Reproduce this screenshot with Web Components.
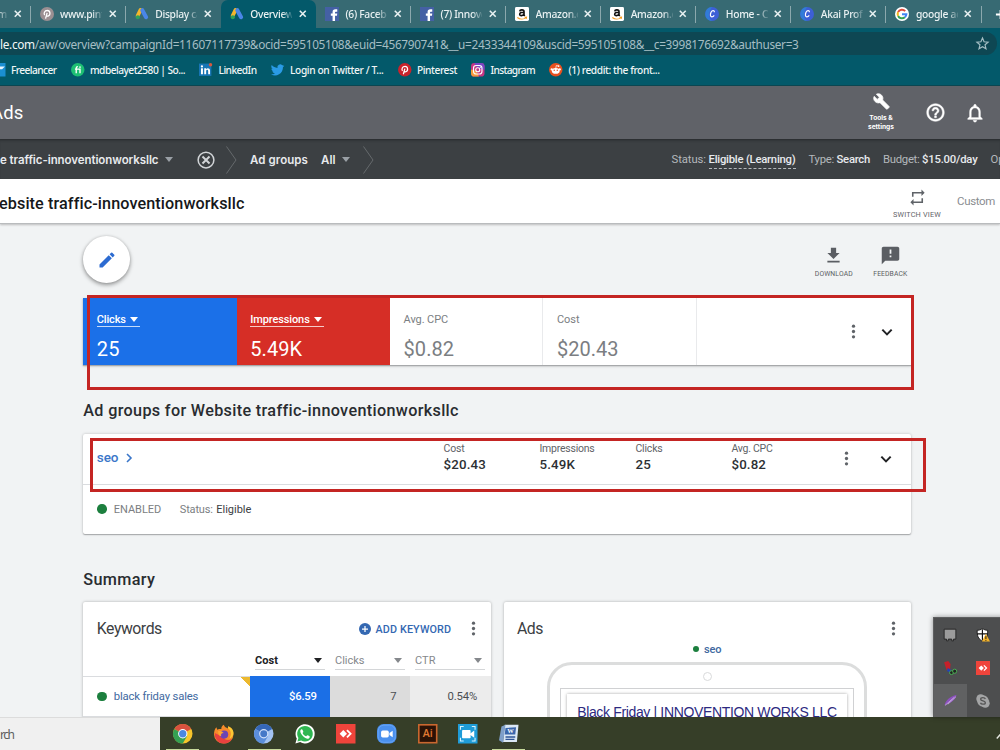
<!DOCTYPE html>
<html lang="en">
<head>
<meta charset="utf-8">
<title>Overview</title>
<style>
    html, body {
        margin: 0;
        height: 100%;
        overflow: hidden;
        background: #f1f3f4;
        font-family: Roboto, "Liberation Sans", sans-serif;
    }
</style>
</head>
<body>
<ads-desktop></ads-desktop>

<script>
const ICONS = {
    close: '<path d="M4.500 4.500l15 15M19.500 4.500l-15 15" stroke="currentColor" stroke-width="4" fill="none"/>',
    plus: '<path d="M12 2v20M2 12h20" stroke="currentColor" stroke-width="4" fill="none"/>',
    star: '<path d="M12 2l2.900 6.800 7.400.7-5.600 4.900 1.700 7.200L12 17.800l-6.400 3.800 1.700-7.200-5.600-4.900 7.400-.7z" stroke="currentColor" stroke-width="2.200" fill="none"/>',
    pin: '<circle cx="12" cy="12" r="12" fill="var(--bg, #c8232c)"/><path d="M9.500 20l2.700-10M8 14c-2-3-.5-8 4.500-8 5.500 0 6 8 1.500 9.500-1.500.5-2.500-.3-3-1.300" fill="none" stroke="#fff" stroke-width="2.200"/>',
    gads: '<path d="M9.500 5L4.500 15" stroke="#f4b62c" stroke-width="6.500" stroke-linecap="round"/><path d="M12.500 5.500l6.500 12" stroke="#4a86e8" stroke-width="7" stroke-linecap="round"/><circle cx="4.800" cy="17.500" r="3.500" fill="#2fa15a"/>',
    facebook: '<rect width="24" height="24" fill="#4460a4"/><path d="M13 24v-9h-3v-4h3V8.500C13 5.500 14.500 4 18 4h3v4h-2.500c-1 0-1.300.5-1.300 1.300V11H21l-.5 4h-3.300v9z" fill="#fff"/>',
    amazon: '<rect width="24" height="24" rx="2.500" fill="#fff"/><path d="M8 7.500c.5-3.500 7.500-3.500 7.500.5v6l1.300 1.500M15.500 9c-4 0-7.500.5-7.500 3.500 0 3.300 6 3 7.500-.7" fill="none" stroke="#111" stroke-width="2.700"/><path d="M4 18c4.500 3.500 11 3.500 15 .3M16.500 17.500l3.300-.2-.6 3" fill="none" stroke="#f39a1e" stroke-width="1.800"/>',
    canva: '<circle cx="12" cy="12" r="12" fill="#3d5fd6"/><path d="M2 6a12 12 0 0 0 10 18C6 19 5 10 12 0 8 0 4 2 2 6z" fill="#2a8fd8" opacity=".6"/><path d="M16 9c.3-4-4-3.500-5.500-.2-2 4-1.500 8 1.300 8 1.700 0 3-1 4-2.500" fill="none" stroke="#fff" stroke-width="2"/>',
    google: '<circle cx="12" cy="12" r="12" fill="#fff"/><g fill="none" stroke-width="3.500"><path d="M17.500 7A7.500 7.500 0 0 0 5.300 8.800" stroke="#e04a3a"/><path d="M5.300 8.800a7.500 7.500 0 0 0 0 6.500" stroke="#f2b61c"/><path d="M5.300 15.300a7.500 7.500 0 0 0 11.600 2.300" stroke="#34a353"/><path d="M16.900 17.600a7.500 7.500 0 0 0 2.600-5.200H12" stroke="#4285f4"/></g>',
    freelancer: '<rect width="24" height="24" fill="#1b8fd2"/><path d="M6 6h17l-5 5h-4l-3 9-2-8z" fill="#e8f6ff"/>',
    fiverr: '<circle cx="12" cy="12" r="12" fill="#1dbf73"/><path d="M9.300 18V9c0-1.700.9-2.500 3-2.500M7 11h9v7" fill="none" stroke="#fff" stroke-width="2.400"/><circle cx="16" cy="7.300" r="1.500" fill="#fff"/>',
    linkedin: '<rect y="1" width="22" height="22" fill="#1775b5"/><path d="M3.500 9.500h3.500V20H3.500zM9.300 9.500h3.300v1.500c2-3 7-2.200 7 2.500V20h-3.300v-6c0-3-3.600-2.600-3.600 0v6H9.300z" fill="#fff"/><circle cx="5.200" cy="6" r="2" fill="#fff"/><circle cx="20.500" cy="3" r="3" fill="#d8583c"/>',
    twitter: '<path d="M23.600 4.900c-.9.400-1.800.7-2.800.8 1-.6 1.800-1.600 2.200-2.700-1 .6-2 1-3.100 1.200a4.900 4.900 0 0 0-8.400 4.500C7.400 8.500 3.800 6.600 1.400 3.600a4.900 4.900 0 0 0 1.500 6.600c-.8 0-1.600-.2-2.200-.6 0 2.300 1.600 4.400 3.900 4.900-.7.200-1.500.2-2.200.1.600 2 2.400 3.400 4.600 3.400A9.900 9.900 0 0 1 0 20.100a14 14 0 0 0 21.200-12.500c1-.7 1.800-1.600 2.400-2.700z" fill="#2a9be6"/>',
    instagram: '<rect width="24" height="24" rx="6" fill="#c63583"/><path d="M0 12c6-1 12 4 14 12H6c-4 0-6-2-6-6z" fill="#f79a3c"/><path d="M6 0h12c4 0 6 2 6 6v6C18 12 8 8 6 0z" fill="#7a45c4"/><rect x="4.500" y="4.500" width="15" height="15" rx="4.500" fill="none" stroke="#fff" stroke-width="2"/><circle cx="12" cy="12" r="3.600" fill="none" stroke="#fff" stroke-width="2"/><circle cx="16.600" cy="7.400" r="1.100" fill="#fff"/>',
    reddit: '<circle cx="12" cy="12" r="12" fill="#e8501e"/><ellipse cx="12" cy="14" rx="7" ry="5" fill="#fff"/><circle cx="4.800" cy="11.500" r="2" fill="#fff"/><circle cx="19.200" cy="11.500" r="2" fill="#fff"/><path d="M12 9.500l1-5 4 1" stroke="#fff" stroke-width="1.300" fill="none"/><circle cx="17" cy="5.500" r="1.600" fill="#fff"/><circle cx="9.300" cy="13" r="1.300" fill="#e8501e"/><circle cx="14.700" cy="13" r="1.300" fill="#e8501e"/>',
    wrench: '<path d="M22.700 19l-9.100-9.100c.9-2.300.4-5-1.500-6.900-2-2-5-2.400-7.400-1.300L9 6 6 9 1.600 4.700C.4 7.100.9 10.100 2.900 12.100c1.900 1.900 4.600 2.400 6.900 1.500l9.100 9.100c.4.4 1 .4 1.400 0l2.300-2.300c.5-.4.5-1.100.1-1.400z" fill="currentColor" stroke="currentColor"/>',
    help: '<path d="M11 18h2v-2h-2v2zm1-16C6.480 2 2 6.480 2 12s4.480 10 10 10 10-4.480 10-10S17.520 2 12 2zm0 18c-4.410 0-8-3.590-8-8s3.590-8 8-8 8 3.590 8 8-3.590 8-8 8zm0-14c-2.210 0-4 1.790-4 4h2c0-1.100.9-2 2-2s2 .9 2 2c0 2-3 1.750-3 5h2c0-2.250 3-2.500 3-5 0-2.210-1.790-4-4-4z" fill="currentColor" stroke="currentColor" stroke-width=".6"/>',
    bell: '<path d="M12 22c1.100 0 2-.9 2-2h-4c0 1.100.9 2 2 2zm6-6v-5c0-3.070-1.630-5.640-4.500-6.320V4c0-.83-.67-1.500-1.500-1.500s-1.500.67-1.500 1.500v.68C7.640 5.360 6 7.920 6 11v5l-2 2v1h16v-1l-2-2zm-2 1H8v-6c0-2.480 1.510-4.500 4-4.500s4 2.020 4 4.500v6z" fill="currentColor" stroke="currentColor" stroke-width=".3"/>',
    closeCircle: '<circle cx="12" cy="12" r="10.500" fill="none" stroke="currentColor" stroke-width="2"/><path d="M7.300 7.300l9.400 9.400M16.700 7.300l-9.400 9.400" stroke="currentColor" stroke-width="2.600"/>',
    switchView: '<path d="M7 7h10v3l4-4-4-4v3H5v6h2V7zm10 10H7v-3l-4 4 4 4v-3h12v-6h-2v4z" fill="currentColor"/>',
    pencil: '<path d="M3 17.250V21h3.750L17.810 9.940l-3.750-3.750L3 17.250zM20.710 7.040a1 1 0 0 0 0-1.410l-2.340-2.340a1 1 0 0 0-1.410 0l-1.830 1.830 3.750 3.750 1.830-1.830z" fill="currentColor"/>',
    download: '<path d="M19 9h-4V3H9v6H5l7 7 7-7zM5 18v2h14v-2H5z" fill="currentColor"/>',
    feedback: '<path d="M20 2H4c-1.100 0-2 .9-2 2v18l4-4h14c1.100 0 2-.9 2-2V4c0-1.100-.9-2-2-2zm-7 12h-2v-2h2v2zm0-4h-2V5h2v5z" fill="currentColor"/>',
    more: '<circle cx="12" cy="4.500" r="2.300" fill="currentColor"/><circle cx="12" cy="12" r="2.300" fill="currentColor"/><circle cx="12" cy="19.500" r="2.300" fill="currentColor"/>',
    expand: '<path d="M5 8.500l7 7 7-7" fill="none" stroke="currentColor" stroke-width="3"/>',
    next: '<path d="M8 4l8 8-8 8" fill="none" stroke="currentColor" stroke-width="3.200"/>',
    up: '<path d="M3 18l9-10 9 10" fill="none" stroke="currentColor" stroke-width="2.500"/>',
    add: '<circle cx="12" cy="12" r="12" fill="currentColor"/><path d="M12 6v12M6 12h12" stroke="#fff" stroke-width="2.500"/>',
    chrome: '<circle cx="12" cy="12" r="12" fill="#f7c52b"/><path d="M12 12L1.600 6A12 12 0 0 1 22.400 6z" fill="#d9513f"/><path d="M1.600 6A12 12 0 0 0 12 24l5.200-9L12 12z" fill="#35a053"/><circle cx="12" cy="12" r="5.700" fill="#fff"/><circle cx="12" cy="12" r="4.500" fill="#4a87e0"/>',
    firefox: '<path d="M12 1c1 3 3 3.500 5 4.500l.5-3C22 5 24 9 24 13a12 11 0 0 1-24 0c0-4 1-7 3-9l1 3c2-1 3-1 5-1 0-2 1-4 3-5z" fill="#f58a2b"/><path d="M1 11a11.500 11.500 0 0 0 11 13c5 0 9-3 10-6-4 3-9 2-11-2z" fill="#e8413f"/><path d="M17 5c4 3 5 8 2 13 3-1 5-4 5-7 0-4-3-7-6-8z" fill="#fcc833"/><circle cx="12.500" cy="13" r="5" fill="#6a45b5"/><path d="M5 9c3-1 5 0 7 2-3 0-4 2-3 4-3 0-4-3-4-6z" fill="#fba530"/>',
    chromium: '<circle cx="12" cy="12" r="12" fill="#a3c3f2"/><path d="M12 12L1.600 6A12 12 0 0 1 22.400 6z" fill="#3567b8"/><path d="M1.600 6A12 12 0 0 0 12 24l5.200-9L12 12z" fill="#5b8edb"/><circle cx="12" cy="12" r="5.700" fill="#d5e3fa"/><circle cx="12" cy="12" r="4.300" fill="#4679c8"/>',
    whatsapp: '<path d="M.5 24l1.700-6.100A11.800 11.800 0 1 1 6.400 22.200z" fill="#fff"/><path d="M3 21.500l1.200-4.300a9.600 9.600 0 1 1 3.400 3.200z" fill="#2fb651"/><path d="M8 6.500c-3 1.500-1 5.500 2 8.500s6.500 4.200 8 1.500c.6-1.200-.2-1.500-2.500-2.700-1-.4-1.300 1.500-2 1.400-1.700-.6-3.600-2.400-4.200-4 0-.7 1.300-1 .9-2C9.500 7.500 9 6 8 6.500z" fill="#fff"/>',
    anydesk: '<rect width="24" height="24" fill="#ef443b"/><path d="M4.500 12l4.500-4.500 4.500 4.500L9 16.500z" fill="#fff"/><path d="M13.500 7.500L18 12l-4.500 4.500" fill="none" stroke="#fff" stroke-width="2.200"/>',
    zoomApp: '<rect width="24" height="24" rx="8" fill="#4a90ee"/><rect x="1.500" y="1.500" width="21" height="21" rx="7" fill="none" stroke="#6da8f5"/><rect x="5" y="8" width="9.500" height="8.500" rx="2" fill="#fff"/><path d="M15.300 11l4-2.800v8l-4-2.700z" fill="#fff"/>',
    illustrator: '<rect x="1" y="1" width="22" height="22" fill="#2b1206" stroke="#c9672f" stroke-width="2"/><text x="12" y="16.500" font-family="Open Sans, sans-serif" font-size="13" font-weight="600" fill="#e07a33" text-anchor="middle">Ai</text>',
    recorder: '<rect width="24" height="24" fill="#1f9cd8"/><path d="M3 7V3h4M17 3h4v4M3 17v4h4M17 21h4v-4" fill="none" stroke="#d8f2ff" stroke-width="1.300"/><rect x="5" y="7.500" width="10.500" height="10" rx="1" fill="#fff"/><path d="M14 12.500l6-4.500v9z" fill="#fff"/>',
    word: '<path d="M7 1h17l-2 21H5z" fill="#dbe8f5"/><path d="M3 3l5-2-3 22-5-3z" fill="#7f9fc9"/><path d="M8 5l13-1-1 9H7z" fill="#3b66ab"/><text x="14" y="11.500" font-family="Liberation Serif, serif" font-size="8" font-weight="700" fill="#fff" text-anchor="middle">W</text><path d="M8 16h12M8 19h11" stroke="#2f5496" stroke-width="1.600"/>',
    disk: '<path d="M2 2h20v17h-4v3h-3v-3H9v3H6v-3H2z" fill="#9b9b9b" stroke="#222" stroke-width="1.500"/>',
    shield: '<path d="M11 1c3 2 6 3 9 3 0 9-1 14-9 19C3 18 2 13 2 4c3 0 6-1 9-3z" fill="#fff" stroke="#111" stroke-width="1.500"/><path d="M11 2v20M2 10h18" stroke="#111" stroke-width="2"/><path d="M17 10l7 13H10z" fill="#f3b32c"/><path d="M17 14v5M17 20.500v1.500" stroke="#111" stroke-width="1.600"/>',
    devices: '<path d="M2 2l7-2 4 5-1 10H6z" fill="#c5202a"/><path d="M8 12l6 3-2 5-5-3z" fill="#2443b5"/><circle cx="14.500" cy="20" r="3.300" fill="#222" stroke="#49b253" stroke-width="1.600"/><circle cx="20" cy="17.500" r="3.500" fill="#222" stroke="#49b253" stroke-width="1.600"/>',
    feather: '<path d="M1 21C3 12 11 4 23 2c-1 8-9 14-18 17z" fill="#8b50bd"/><path d="M2 21L19 6M7 19L22 5" stroke="#cbb0e3" stroke-width="1.500"/>',
    skype: '<circle cx="8" cy="8" r="7.500" fill="#a4a5a6"/><circle cx="16" cy="16" r="7.500" fill="#a4a5a6"/><circle cx="12" cy="12" r="10" fill="#a4a5a6"/><path d="M16 8.500c-1-3-8-3-8 .3 0 3.700 8 2.300 8 6 0 3.500-7.500 3.500-8.300.2" stroke="#555" stroke-width="2.300" fill="none"/>',
};

// Small base class: shadow root with the element's styles and markup
class BaseElement extends HTMLElement {
    constructor() {
        super();
        this.attachShadow({ mode: 'open' });
    }

    connectedCallback() {
        this.shadowRoot.innerHTML = this.template();
    }

    attr(name, fallback = '') {
        return this.getAttribute(name) ?? fallback;
    }
}

// Text set to a given width by letter spacing
class FitText extends BaseElement {
    template() {
        return `
            <style>
                :host { display: inline-block; flex: none; white-space: nowrap; }
                span { display: inline-block; }
            </style>
            <span><slot></slot></span>
        `;
    }

    connectedCallback() {
        super.connectedCallback();
        const width = parseFloat(this.attr('w', '0'));
        if (!width) return;
        const span = this.shadowRoot.querySelector('span');
        const natural = span.getBoundingClientRect().width;
        span.style.letterSpacing = (width - natural) / this.textContent.length + 'px';
        this.style.width = width + 'px';
    }
}

class UiIcon extends BaseElement {
    template() {
        const size = this.attr('size', '16');
        return `
            <style>
                :host { display: block; flex: none; width: ${size}px; height: ${size}px; }
                svg { display: block; overflow: visible; }
            </style>
            <svg width="${size}" height="${size}" viewBox="0 0 24 24">${ICONS[this.attr('name')]}</svg>
        `;
    }
}

class DropCaret extends BaseElement {
    template() {
        return `
            <style>
                :host {
                    display: block;
                    flex: none;
                    border: 4.5px solid transparent;
                    border-top: 5px solid currentColor;
                    border-bottom: 0;
                }
            </style>
        `;
    }
}

class StatusDot extends BaseElement {
    template() {
        const size = this.attr('size', '9.500');
        return `
            <style>
                :host {
                    display: block;
                    flex: none;
                    width: ${size}px;
                    height: ${size}px;
                    border-radius: 50%;
                    background: #1c7f3e;
                }
            </style>
        `;
    }
}

class BrowserTab extends BaseElement {
    template() {
        return `
            <style>
                :host {
                    display: flex;
                    align-items: center;
                    flex: none;
                    box-sizing: border-box;
                    width: 95.1px;
                    height: 28px;
                    padding-left: 9px;
                    position: relative;
                    color: #e9f1f2;
                    font: 500 10.3px "Noto Sans", sans-serif;
                }
                :host([active]) { background: #03596a; border-radius: 7px 7px 0 0; }
                .label {
                    width: 42px;
                    margin: 0 5.5px 0 6.5px;
                    overflow: hidden;
                    white-space: nowrap;
                    letter-spacing: -0.3px;
                    -webkit-mask-image: linear-gradient(90deg, #000 76%, transparent 104%);
                    mask-image: linear-gradient(90deg, #000 76%, transparent 104%);
                }
                :host([end]) .label { text-align: right; }
                .line {
                    position: absolute;
                    right: 0;
                    top: 6px;
                    width: 1px;
                    height: 17px;
                    background: #8ba8ad;
                }
                :host([plain]) .line, :host([active]) .line { display: none; }
            </style>
            <ui-icon name="${this.attr('icon')}" size="14"></ui-icon>
            <div class="label"><slot></slot></div>
            <ui-icon name="close" size="9.500"></ui-icon>
            <div class="line"></div>
        `;
    }
}

class BookMark extends BaseElement {
    template() {
        return `
            <style>
                :host { display: flex; align-items: center; gap: 6px; flex: none; }
            </style>
            <ui-icon name="${this.attr('icon')}" size="13.500"></ui-icon>
            <fit-text w="${this.attr('w')}">${this.textContent}</fit-text>
        `;
    }
}

class BrowserChrome extends BaseElement {
    template() {
        return `
            <style>
                :host { display: block; flex: none; height: 85px; background: #03596a; border-bottom: 1px solid #0c4651; overflow: hidden; }
                .tabs { display: flex; align-items: center; height: 28px; background: #376a73; }
                .tabs :first-child { margin-left: -64.5px; }
                .new { color: #fff; margin-left: 13px; }
                .url {
                    display: flex;
                    align-items: center;
                    justify-content: space-between;
                    box-sizing: border-box;
                    height: 23px;
                    margin: 4px 3px 0 -20px;
                    padding: 0 8px 0 20px;
                    border-radius: 12px;
                    background: #0e4753;
                    color: #a5bec4;
                    font: 11.8px "Noto Sans", sans-serif;
                }
                .url b { font-weight: 400; color: #f2f7f8; }
                .marks {
                    display: flex;
                    gap: 14px;
                    align-items: center;
                    height: 30px;
                    margin-left: -8.5px;
                    color: #f0f5f6;
                    font: 500 10.2px "Noto Sans", sans-serif;
                }
            </style>
            <div class="tabs">
                <browser-tab icon="amazon" end>m</browser-tab>
                <browser-tab icon="pin" style="--bg: #9b8f92">www.pinterest</browser-tab>
                <browser-tab icon="gads" plain>Display ca</browser-tab>
                <browser-tab icon="gads" active>Overview</browser-tab>
                <browser-tab icon="facebook">(6) Facebook</browser-tab>
                <browser-tab icon="facebook">(7) Innove</browser-tab>
                <browser-tab icon="amazon">Amazon.com</browser-tab>
                <browser-tab icon="amazon">Amazon.com</browser-tab>
                <browser-tab icon="canva">Home - Ca</browser-tab>
                <browser-tab icon="canva">Akai Profes</browser-tab>
                <browser-tab icon="google">google ads</browser-tab>
                <ui-icon class="new" name="plus" size="11"></ui-icon>
            </div>
            <div class="url">
                <fit-text w="798.500"><b>le.com</b>/aw/overview?campaignId=11607117739&amp;ocid=595105108&amp;euid=456790741&amp;__u=2433344109&amp;uscid=595105108&amp;__c=3998176692&amp;authuser=3</fit-text>
                <ui-icon name="star" size="13"></ui-icon>
            </div>
            <div class="marks">
                <book-mark icon="freelancer" w="45.500">Freelancer</book-mark>
                <book-mark icon="fiverr" w="95">mdbelayet2580 | So...</book-mark>
                <book-mark icon="linkedin" w="38">LinkedIn</book-mark>
                <book-mark icon="twitter" w="93.500">Login on Twitter / T...</book-mark>
                <book-mark icon="pin" w="40">Pinterest</book-mark>
                <book-mark icon="instagram" w="44.500">Instagram</book-mark>
                <book-mark icon="reddit" w="91">(1) reddit: the front...</book-mark>
            </div>
        `;
    }
}

// Icon above a small caption
class IconAction extends BaseElement {
    template() {
        return `
            <style>
                :host { display: flex; flex-direction: column; align-items: center; flex: none; text-align: center; }
            </style>
            <ui-icon name="${this.attr('icon')}" size="${this.attr('size', '20')}"></ui-icon>
            <slot></slot>
        `;
    }
}

class AdsHeader extends BaseElement {
    template() {
        return `
            <style>
                :host {
                    display: flex;
                    align-items: center;
                    flex: none;
                    box-sizing: border-box;
                    height: 53px;
                    color: #fff;
                    background: #606268;
                }
                .brand { margin: 1px 0 0 -9px; flex: 1; font-size: 18.5px; }
                icon-action { width: 30px; font: 700 6.6px/8.5px Inter, sans-serif; margin: -1px 28.5px 0 0; }
                icon-action div { margin-top: 4.5px; }
                .bell { margin: 0 14px 0 18.5px; }
            </style>
            <div class="brand"><fit-text w="32.500">Ads</fit-text></div>
            <icon-action icon="wrench" size="17"><div>Tools &amp;<br>settings</div></icon-action>
            <ui-icon name="help" size="21"></ui-icon>
            <ui-icon class="bell" name="bell" size="22"></ui-icon>
        `;
    }
}

class CrumbBar extends BaseElement {
    template() {
        return `
            <style>
                :host {
                    display: flex;
                    align-items: center;
                    flex: none;
                    box-sizing: border-box;
                    height: 40px;
                    padding-top: 1px;
                    overflow: hidden;
                    background: #3c4043;
                    box-shadow: inset 0 3px 3px -2px #25282b;
                    color: #e8eaed;
                    font: 600 11.5px Inter, sans-serif;
                }
                drop-caret { color: #9aa0a6; }
                ui-icon { color: #d2d5d8; }
                svg { display: block; flex: none; }
                .facts {
                    display: flex;
                    align-items: center;
                    margin-left: auto;
                    font: 500 11.3px Roboto, sans-serif;
                }
                .facts i { font-style: normal; font-weight: 400; color: #b4b8bc; margin-right: 2.5px; }
                .facts fit-text { margin-right: 13px; }
                .status { border-bottom: 1px dashed #b4b8bc; line-height: 17px; }
            </style>
            <fit-text w="158.500">e traffic-innoventionworksllc</fit-text>
            <drop-caret style="margin: 0 24px 0 6px"></drop-caret>
            <ui-icon name="closeCircle" size="18"></ui-icon>
            <svg style="margin: 0 13px 0 11.5px" width="11" height="28"><path d="M.5.5l9.500 13.500L.5 27.500" fill="none" stroke="#666a6d"/></svg>
            <fit-text w="58">Ad groups</fit-text>
            <fit-text w="14.500" style="margin-left: 13px">All</fit-text>
            <drop-caret style="margin: 0 13px 0 6px"></drop-caret>
            <svg width="11" height="28"><path d="M.5.5l9.500 13.500L.5 27.500" fill="none" stroke="#666a6d"/></svg>
            <div class="facts">
                <i><fit-text w="34.500" style="margin: 0">Status:</fit-text></i><fit-text class="status" w="87">Eligible (Learning)</fit-text>
                <i><fit-text w="25.500" style="margin: 0">Type:</fit-text></i><fit-text w="33.500">Search</fit-text>
                <i><fit-text w="36.500" style="margin: 0">Budget:</fit-text></i><fit-text w="55.500">$15.00/day</fit-text>
                <i style="width: 9.5px; margin: 0">Op</i>
            </div>
        `;
    }
}

class TitleBar extends BaseElement {
    template() {
        return `
            <style>
                :host {
                    display: flex;
                    align-items: center;
                    flex: none;
                    box-sizing: border-box;
                    height: 44.5px;
                    background: #fff;
                    border-bottom: 1px solid #b9bbbd;
                    box-shadow: 0 1px 2px rgba(0, 0, 0, .22);
                    position: relative;
                }
                h1 { flex: 1; margin: 5px 0 0 -1px; font: 500 16.2px Roboto, sans-serif; color: #16181a; }
                icon-action { color: #5f6368; font-size: 7.3px; line-height: 9px; margin: 5px 16px 0 0; }
                .custom { color: #8a8d91; font-size: 11.5px; margin: 0 5px 0 0; }
            </style>
            <h1><fit-text w="244.500">ebsite traffic-innoventionworksllc</fit-text></h1>
            <icon-action icon="switchView" size="19"><fit-text w="48" style="margin-top: 3px">SWITCH VIEW</fit-text></icon-action>
            <fit-text class="custom" w="38">Custom</fit-text>
        `;
    }
}

class ScoreCell extends BaseElement {
    template() {
        const caret = this.hasAttribute('fill') ? '<drop-caret></drop-caret>' : '';
        return `
            <style>
                :host {
                    display: block;
                    box-sizing: border-box;
                    flex: none;
                    width: 153.4px;
                    padding: 14px 0 0 13.5px;
                    color: #7b7e82;
                    background: ${this.attr('fill', '#fff')};
                    border-right: 1px solid ${this.attr('fill', '#e9eaec')};
                }
                :host([fill]) { color: #fff; }
                .label {
                    display: flex;
                    align-items: center;
                    gap: 4px;
                    width: max-content;
                    height: 14px;
                    padding-right: 2.5px;
                    font-size: 11px;
                    border-bottom: 1px solid transparent;
                }
                :host([fill]) .label { border-color: rgba(255, 255, 255, .75); font-weight: 500; }
                .value { margin-top: 10px; font-size: 20px; line-height: 24px; }
            </style>
            <div class="label"><fit-text w="${this.attr('lw')}">${this.attr('label')}</fit-text>${caret}</div>
            <div class="value"><fit-text w="${this.attr('vw')}">${this.attr('value')}</fit-text></div>
        `;
    }
}

class ScoreCard extends BaseElement {
    template() {
        return `
            <style>
                :host { display: flex; height: 67px; background: #fff; box-shadow: 0 1px 1px #a7a9ab, 0 1px 3px rgba(0, 0, 0, .2); }
                .tools { display: flex; align-items: center; margin-left: auto; gap: 17px; padding-right: 15.7px; color: #202124; }
                .tools :first-child { color: #5f6368; }
            </style>
            <slot></slot>
            <div class="tools">
                <ui-icon name="more" size="17"></ui-icon>
                <ui-icon name="expand" size="16"></ui-icon>
            </div>
        `;
    }
}

class GroupMetric extends BaseElement {
    template() {
        return `
            <style>
                :host { display: block; flex: none; width: 96px; color: #5f6368; font-size: 10.5px; line-height: 14px; }
                b { display: block; font-weight: 500; font-size: 13.3px; line-height: 18px; color: #2c2f33; }
            </style>
            <fit-text w="${this.attr('lw')}">${this.attr('label')}</fit-text>
            <b><fit-text w="${this.attr('vw')}">${this.attr('value')}</fit-text></b>
        `;
    }
}

class AdGroupCard extends BaseElement {
    template() {
        return `
            <style>
                :host { display: block; height: 100px; background: #fff; border-radius: 2px; box-shadow: 0 1px 1px #a7a9ab, 0 0 3px rgba(0, 0, 0, .22); }
                .top { display: flex; box-sizing: border-box; height: 51px; padding-left: 13.5px; border-bottom: 1px solid #dadcdf; }
                .name { display: flex; align-items: center; gap: 4.5px; width: 346.7px; height: 47px; color: #3a76c9; font-size: 13.5px; font-weight: 500; }
                .name fit-text { margin-top: -1px; }
                group-metric { margin-top: 8px; }
                .more { margin: 16px 0 0 10.5px; color: #5f6368; }
                .expand { margin: 17px 0 0 23.5px; color: #202124; }
                .bottom { display: flex; align-items: center; height: 49px; padding-left: 14px; color: #7b7e82; font-size: 11px; }
                .ok { color: #3c4043; margin-left: 3.5px; }
            </style>
            <div class="top">
                <div class="name"><fit-text w="21.500">seo</fit-text><ui-icon name="next" size="12"></ui-icon></div>
                <group-metric label="Cost" lw="21" value="$20.43" vw="42.500"></group-metric>
                <group-metric label="Impressions" lw="55" value="5.49K" vw="35.500"></group-metric>
                <group-metric label="Clicks" lw="27" value="25" vw="15.500"></group-metric>
                <group-metric label="Avg. CPC" lw="41" value="$0.82" vw="34.500"></group-metric>
                <ui-icon class="more" name="more" size="17"></ui-icon>
                <ui-icon class="expand" name="expand" size="16"></ui-icon>
            </div>
            <div class="bottom">
                <status-dot style="margin-top: -1px"></status-dot>
                <fit-text w="47.500" style="margin: 0 18.5px 0 7px">ENABLED</fit-text>
                <fit-text w="33">Status:</fit-text>
                <fit-text class="ok" w="35">Eligible</fit-text>
            </div>
        `;
    }
}

class SummaryCard extends BaseElement {
    template() {
        return `
            <style>
                :host { display: block; flex: none; width: 407.3px; height: 240px; background: #fff; border-radius: 2px; box-shadow: 0 0 3px rgba(0, 0, 0, .3); }
                header { display: flex; align-items: center; height: 43px; padding: 5px 8.5px 0 13.5px; color: #3c4043; font-size: 15.8px; }
                header :first-child { margin: -1px auto 0 0; }
                .more { color: #5f6368; margin-left: 14px; }
            </style>
            <header>
                <fit-text w="${this.attr('tw')}">${this.attr('heading')}</fit-text>
                <slot name="action"></slot>
                <ui-icon class="more" name="more" size="17"></ui-icon>
            </header>
            <slot></slot>
        `;
    }
}

class SortHead extends BaseElement {
    template() {
        return `
            <style>
                :host {
                    display: flex;
                    align-items: center;
                    justify-content: space-between;
                    flex: none;
                    box-sizing: border-box;
                    width: 70px;
                    height: 18px;
                    margin: 0 5px;
                    padding-right: 3px;
                    border-bottom: 1px solid #d4d6d8;
                    color: #85888c;
                    font-size: 11px;
                }
                :host([on]) { color: #202124; font-weight: 700; }
            </style>
            <fit-text w="${this.attr('w')}">${this.textContent}</fit-text>
            <drop-caret></drop-caret>
        `;
    }
}

class KeywordTable extends BaseElement {
    template() {
        return `
            <style>
                :host { display: block; font-size: 11.3px; }
                .head { display: flex; align-items: flex-start; justify-content: flex-end; height: 24.5px; padding: 1.5px .6px 0 0; }
                .row { display: grid; grid-template-columns: 166.8px 80px 80px 1fr; height: 40px; text-align: right; line-height: 41px; }
                .row div { padding-right: 13.5px; color: #4b4e52; }
                .row .name {
                    display: flex;
                    align-items: center;
                    gap: 7px;
                    box-sizing: border-box;
                    padding: 0 0 0 14px;
                    line-height: 38px;
                    border-top: 1px solid #dadcdf;
                    color: #41699f;
                    background: linear-gradient(225deg, #ecb92f 6.5px, transparent 7px);
                }
                .row status-dot { margin-top: -1px; }
                .row .cost { background: #1b6fe6; color: #fff; font-weight: 500; }
                .row .clicks { background: #dcdcdc; }
                .row .ctr { background: #ececec; }
            </style>
            <div class="head">
                <sort-head on w="23">Cost</sort-head>
                <sort-head w="29.500">Clicks</sort-head>
                <sort-head w="20.500">CTR</sort-head>
            </div>
            <div class="row">
                <div class="name"><status-dot></status-dot><fit-text w="84.500">black friday sales</fit-text></div>
                <div class="cost"><fit-text w="27.500">$6.59</fit-text></div>
                <div class="clicks">7</div>
                <div class="ctr"><fit-text w="29.500">0.54%</fit-text></div>
            </div>
            <div class="row">
                <div class="name"></div>
                <div class="cost"></div>
                <div class="clicks"></div>
                <div class="ctr"></div>
            </div>
        `;
    }
}

class AdPreview extends BaseElement {
    template() {
        return `
            <style>
                :host { display: flex; flex-direction: column; align-items: center; }
                .group { display: flex; align-items: center; gap: 4.5px; height: 12px; margin: -7px 0 7px; color: #41699f; font: 500 11px Roboto, sans-serif; }
                .device { box-sizing: border-box; width: 320px; height: 120px; border: 3px solid #dcdddd; border-radius: 25px; }
                .camera { box-sizing: border-box; width: 9px; height: 9px; margin: 6.5px auto 7.5px; border: 1px solid #d9dadb; border-radius: 50%; }
                .screen { box-sizing: border-box; width: 294px; height: 100px; margin: auto; padding: 5px 6px; border: 1px solid #d0d1d3; }
                .ad { height: 80px; padding: 10px 10px; box-shadow: 0 0 3px rgba(0, 0, 0, .35); color: #2d2a80; font: 14px/17px "Liberation Sans", sans-serif; }
            </style>
            <div class="group"><status-dot size="6.500"></status-dot><fit-text w="17.500">seo</fit-text></div>
            <div class="device">
                <div class="camera"></div>
                <div class="screen"><div class="ad"><fit-text w="259.500">Black Friday | INNOVENTION WORKS LLC</fit-text></div></div>
            </div>
        `;
    }
}

class OverviewPage extends BaseElement {
    template() {
        return `
            <style>
                :host { display: block; flex: 1; min-height: 0; overflow: hidden; margin-top: -.5px; padding-left: 83.3px; background: #f1f3f4; position: relative; }
                main { width: 827.5px; }
                .actions { display: flex; height: 75px; color: #5b5e63; font-size: 6.8px; line-height: 8px; }
                .edit {
                    display: flex;
                    align-items: center;
                    justify-content: center;
                    width: 47px;
                    height: 47px;
                    margin: 13px auto 0 0;
                    border-radius: 50%;
                    background: #fff;
                    color: #2c6bd1;
                    box-shadow: 0 2px 4px rgba(0, 0, 0, .38), 0 0 3px rgba(0, 0, 0, .12);
                }
                icon-action { margin: 22px 3.5px 0 17px; }
                icon-action fit-text { margin-top: 4px; }
                h2 { box-sizing: border-box; height: 68px; margin: 0; padding-top: 33px; font: 500 16.2px/24px Roboto, sans-serif; color: #292c30; }
                .cards { display: flex; justify-content: space-between; }
                .add { display: flex; align-items: center; gap: 4.5px; margin-top: 1px; color: #3468b2; font-size: 10.8px; font-weight: 500; }
                .mark { position: absolute; box-sizing: border-box; border: 3px solid #c42523; }
                .mark.one { left: 87px; top: 72px; width: 827px; height: 95px; }
                .mark.two { left: 90px; top: 215px; width: 836px; height: 54px; }
            </style>
            <main>
                <div class="actions">
                    <div class="edit"><ui-icon name="pencil" size="20"></ui-icon></div>
                    <icon-action icon="download" size="21"><fit-text w="38">DOWNLOAD</fit-text></icon-action>
                    <icon-action icon="feedback" size="21"><fit-text w="34">FEEDBACK</fit-text></icon-action>
                </div>
                <score-card>
                    <score-cell fill="#1b70e8" label="Clicks" lw="29" value="25" vw="23"></score-cell>
                    <score-cell fill="#d62e26" label="Impressions" lw="59.500" value="5.49K" vw="52"></score-cell>
                    <score-cell label="Avg. CPC" lw="44.500" value="$0.82" vw="50.500"></score-cell>
                    <score-cell label="Cost" lw="22.500" value="$20.43" vw="61.500"></score-cell>
                </score-card>
                <h2 style="margin-top: 1px"><fit-text w="374.500">Ad groups for Website traffic-innoventionworksllc</fit-text></h2>
                <ad-group-card></ad-group-card>
                <h2 style="padding-top: 34px"><fit-text w="72">Summary</fit-text></h2>
                <div class="cards">
                    <summary-card heading="Keywords" tw="65">
                        <div class="add" slot="action"><ui-icon name="add" size="12"></ui-icon><fit-text w="75.500">ADD KEYWORD</fit-text></div>
                        <keyword-table></keyword-table>
                    </summary-card>
                    <summary-card heading="Ads" tw="26">
                        <ad-preview></ad-preview>
                    </summary-card>
                </div>
            </main>
            <div class="mark one"></div>
            <div class="mark two"></div>
        `;
    }
}

class TrayPopup extends BaseElement {
    template() {
        return `
            <style>
                :host {
                    display: grid;
                    grid-template-columns: 33px 33px;
                    grid-template-rows: 33px 33px 33px;
                    position: absolute;
                    left: 932.5px;
                    bottom: 33px;
                    width: 70px;
                    border: 1px solid #5e5f60;
                    border-bottom: 0;
                    background: #4d4e4f;
                    box-shadow: 0 0 5px rgba(0, 0, 0, .4);
                }
                div { display: flex; align-items: center; justify-content: center; }
                .hot { background: #606162; }
            </style>
            <div><ui-icon name="disk" size="14"></ui-icon></div>
            <div><ui-icon name="shield" size="14"></ui-icon></div>
            <div><ui-icon name="devices" size="14"></ui-icon></div>
            <div><ui-icon name="anydesk" size="14"></ui-icon></div>
            <div class="hot"><ui-icon name="feather" size="13"></ui-icon></div>
            <div><ui-icon name="skype" size="14"></ui-icon></div>
        `;
    }
}

class TaskBar extends BaseElement {
    template() {
        const apps = ['chrome', 'firefox', 'chromium', 'whatsapp', 'anydesk', 'zoomApp', 'illustrator', 'recorder', 'word'];
        const open = ['chrome', 'chromium', 'word'];
        return `
            <style>
                :host { display: flex; flex: none; height: 33px; background: #363e28; overflow: hidden; position: relative; }
                .search { width: 160px; box-sizing: border-box; background: #f0f0f0; color: #5c5c5c; font: 12px/34px "Noto Sans", sans-serif; margin-right: 6px; border-top: 1px solid #dcdcdc; }
                .app { display: flex; justify-content: center; box-sizing: border-box; width: 33px; margin-right: 7.8px; padding-top: 7px; border-bottom: 1.5px solid transparent; }
                .open { border-color: #c8da9c; }
                .up { margin: 11px -9px 0 auto; color: #e4e6e0; }
            </style>
            <div class="search"><fit-text w="13.500">rch</fit-text></div>
            ${apps.map(a => `<div class="app ${open.includes(a) ? 'open' : ''}"><ui-icon name="${a}" size="19.500"></ui-icon></div>`).join('')}
            <ui-icon class="up" name="up" size="14"></ui-icon>
        `;
    }
}

class AdsDesktop extends BaseElement {
    template() {
        return `
            <style>
                :host { display: flex; flex-direction: column; width: 1000px; height: 750px; overflow: hidden; position: relative; }
            </style>
            <browser-chrome></browser-chrome>
            <ads-header></ads-header>
            <crumb-bar></crumb-bar>
            <title-bar style="z-index: 1"></title-bar>
            <overview-page></overview-page>
            <task-bar></task-bar>
            <tray-popup></tray-popup>
        `;
    }
}

customElements.define('fit-text', FitText);
customElements.define('ui-icon', UiIcon);
customElements.define('drop-caret', DropCaret);
customElements.define('status-dot', StatusDot);
customElements.define('browser-tab', BrowserTab);
customElements.define('book-mark', BookMark);
customElements.define('browser-chrome', BrowserChrome);
customElements.define('icon-action', IconAction);
customElements.define('ads-header', AdsHeader);
customElements.define('crumb-bar', CrumbBar);
customElements.define('title-bar', TitleBar);
customElements.define('score-cell', ScoreCell);
customElements.define('score-card', ScoreCard);
customElements.define('group-metric', GroupMetric);
customElements.define('ad-group-card', AdGroupCard);
customElements.define('summary-card', SummaryCard);
customElements.define('sort-head', SortHead);
customElements.define('keyword-table', KeywordTable);
customElements.define('ad-preview', AdPreview);
customElements.define('overview-page', OverviewPage);
customElements.define('tray-popup', TrayPopup);
customElements.define('task-bar', TaskBar);
customElements.define('ads-desktop', AdsDesktop);
</script>
</body>
</html>
